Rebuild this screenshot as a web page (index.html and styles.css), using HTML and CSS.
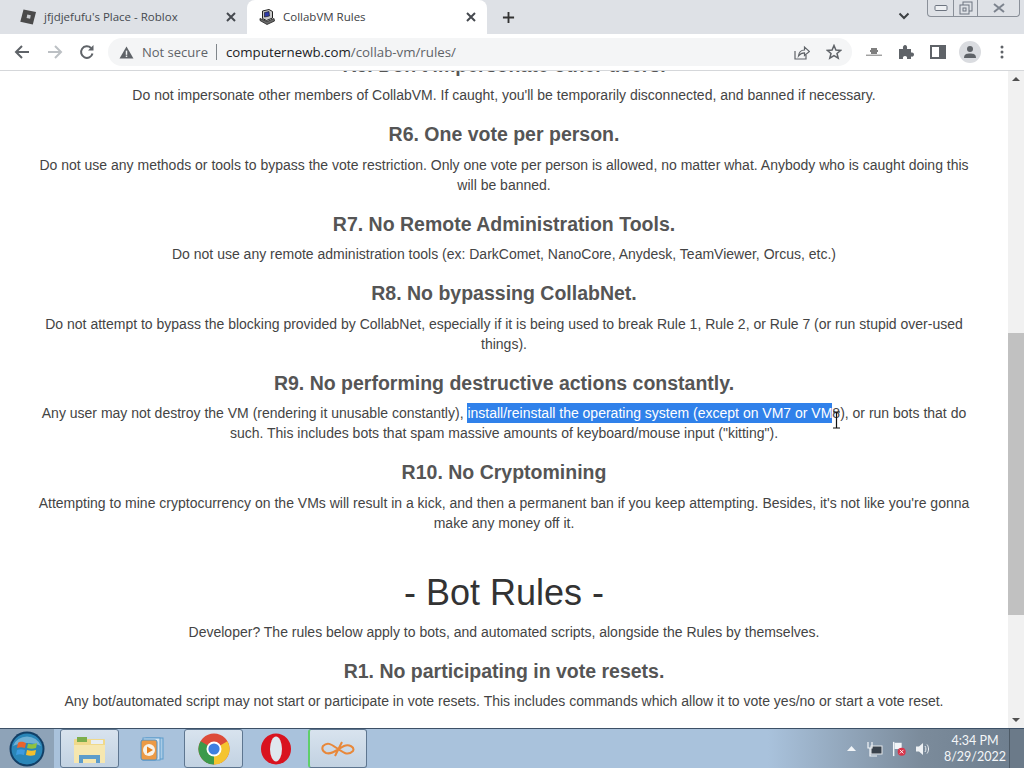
FILE: index.html
```html
<!DOCTYPE html>
<html lang="en">
<head>
  <meta charset="UTF-8">
  <title>CollabVM Rules</title>
  <link rel="stylesheet" href="styles.css">
</head>
<body>

  <!-- Tab strip -->
  <div class="tab-strip">
    <div class="tab">
      <svg class="favicon" viewBox="0 0 16 16"><path d="M3.5 0.5 L16 3 L12.8 15.5 L0.3 12.8 Z" fill="#4a4a4a"/><path d="M7.3 5.6 L10.8 6.3 L10.1 9.7 L6.6 9 Z" fill="#c9ccd0"/></svg>
      <span class="tab-title">jfjdjefufu's Place - Roblox</span>
      <svg class="tab-close" viewBox="0 0 10 10"><path d="M1 1 L9 9 M9 1 L1 9" stroke="#45494f" stroke-width="2"/></svg>
    </div>
    <div class="tab active">
      <svg class="favicon" viewBox="0 0 16 16"><path d="M1 11.5 L8 15.5 L15.5 12 L15 9.5 L8 12.5 L1 9.5 Z" fill="#6b6b6b" stroke="#222" stroke-width="0.8"/><path d="M3.5 2 L10 0.5 L13.5 2.5 L13.5 9 L7.5 11.5 L3.5 9.5 Z" fill="#c9c9c9" stroke="#222"/><path d="M5.5 3.5 L10 2.5 L10.5 7 L5.5 8 Z" fill="#2e3aa8" stroke="#111" stroke-width="0.6"/></svg>
      <span class="tab-title">CollabVM Rules</span>
      <svg class="tab-close" viewBox="0 0 10 10"><path d="M1 1 L9 9 M9 1 L1 9" stroke="#45494f" stroke-width="2"/></svg>
    </div>
    <svg class="new-tab" viewBox="0 0 14 14"><path d="M7 1 V13 M1 7 H13" stroke="#333" stroke-width="2"/></svg>
    <div class="strip-end">
      <svg class="tab-search" viewBox="0 0 12 8"><path d="M1.5 1.5 L6 6 L10.5 1.5" fill="none" stroke="#3c4043" stroke-width="2"/></svg>
      <div class="window-buttons">
        <div class="win-btn"><svg viewBox="0 0 14 8" width="14" height="8"><rect x="1" y="1.5" width="12" height="5" rx="1" fill="#eef0f3" stroke="#6d7480"/></svg></div>
        <div class="win-btn narrow"><svg viewBox="0 0 14 14" width="14" height="14"><rect x="4" y="1" width="9" height="9" fill="none" stroke="#6d7480"/><rect x="1" y="4" width="9" height="9" fill="#dee1e6" stroke="#6d7480"/><rect x="4" y="7" width="3" height="3" fill="none" stroke="#6d7480"/></svg></div>
        <div class="win-btn wide"><svg viewBox="0 0 12 10" width="12" height="10"><path d="M1 1 L11 9 M11 1 L1 9" stroke="#7c838e" stroke-width="2"/></svg></div>
      </div>
    </div>
  </div>

  <!-- Address bar -->
  <div class="toolbar">
    <svg class="nav-icon" viewBox="0 0 16 16"><path d="M15 8 H2 M8 2 L2 8 L8 14" fill="none" stroke="#5f6368" stroke-width="2"/></svg>
    <svg class="nav-icon" viewBox="0 0 16 16"><path d="M1 8 H14 M8 2 L14 8 L8 14" fill="none" stroke="#bcc0c4" stroke-width="2"/></svg>
    <svg class="nav-icon" viewBox="0 0 16 16"><path d="M13.5 9.5 A5.8 5.8 0 1 1 12 4" fill="none" stroke="#5f6368" stroke-width="2"/><path d="M14.5 1 V6.5 H9 Z" fill="#5f6368"/></svg>
    <div class="omnibox">
      <svg class="warn-icon" viewBox="0 0 16 14"><path d="M8 0.5 L15.5 13.5 H0.5 Z" fill="#5f6368"/><rect x="7.2" y="5" width="1.6" height="4.5" fill="#f1f3f4"/><rect x="7.2" y="10.3" width="1.6" height="1.6" fill="#f1f3f4"/></svg>
      <span class="not-secure">Not secure</span>
      <span class="omni-sep"></span>
      <span class="url">computernewb.com<span class="url-path">/collab-vm/rules/</span></span>
      <svg class="omni-icon share" viewBox="0 0 16 16"><path d="M1 7 V15 H12 V11" fill="none" stroke="#5f6368" stroke-width="1.2"/><path d="M4.5 12 C5 8 7.5 6 10.5 6 V3 L15.5 7.5 L10.5 11.5 V8.8 C8 8.8 6 10 4.5 12 Z" fill="none" stroke="#5f6368" stroke-width="1.2"/></svg>
      <svg class="omni-icon" viewBox="0 0 16 16"><path d="M8 1.5 L9.9 6 L14.7 6.4 L11 9.5 L12.2 14.2 L8 11.7 L3.8 14.2 L5 9.5 L1.3 6.4 L6.1 6 Z" fill="none" stroke="#5f6368" stroke-width="1.5"/></svg>
    </div>
    <div class="tool-icons">
      <svg class="ext-mini" viewBox="0 0 16 8"><path d="M5 1 H11 M4 3 H12 M5 5 H11" stroke="#555" stroke-width="1.3"/><path d="M0 7.2 H16" stroke="#777"/></svg>
      <svg class="tool-icon" viewBox="0 0 16 16"><path d="M1 5 H5 C4.5 2 6 1 7 1 C8.5 1 9.5 2.5 9 5 H13 V8.5 C15.5 8 16 9.5 16 10.5 C16 12 15 13 13 12.5 V15 H9 C9.5 13 8.5 12 7 12 C5.5 12 4.5 13 5 15 H1 Z" fill="#5f6368"/></svg>
      <svg class="tool-icon panel" viewBox="0 0 16 16"><path d="M1 2 H15 V14 H1 Z" fill="none" stroke="#5f6368" stroke-width="2"/><rect x="9" y="2" width="6" height="12" fill="#5f6368"/></svg>
      <div class="avatar"><svg viewBox="0 0 16 16" width="16" height="16"><circle cx="8" cy="5" r="3" fill="#5f6368"/><path d="M2 14 C2 10 5 9.5 8 9.5 C11 9.5 14 10 14 14 Z" fill="#5f6368"/></svg></div>
      <svg class="menu-dots" viewBox="0 0 4 14"><circle cx="2" cy="2" r="1.5" fill="#5f6368"/><circle cx="2" cy="7" r="1.5" fill="#5f6368"/><circle cx="2" cy="12" r="1.5" fill="#5f6368"/></svg>
    </div>
  </div>

  <!-- Page -->
  <div class="viewport">
    <div class="page">
      <div class="rule">
        <h3>R5. Don't impersonate other users.</h3>
        <p>Do not impersonate other members of CollabVM. If caught, you'll be temporarily disconnected, and banned if necessary.</p>
      </div>
      <div class="rule">
        <h3>R6. One vote per person.</h3>
        <p>Do not use any methods or tools to bypass the vote restriction. Only one vote per person is allowed, no matter what. Anybody who is caught doing this will be banned.</p>
      </div>
      <div class="rule">
        <h3>R7. No Remote Administration Tools.</h3>
        <p>Do not use any remote administration tools (ex: DarkComet, NanoCore, Anydesk, TeamViewer, Orcus, etc.)</p>
      </div>
      <div class="rule">
        <h3>R8. No bypassing CollabNet.</h3>
        <p>Do not attempt to bypass the blocking provided by CollabNet, especially if it is being used to break Rule 1, Rule 2, or Rule 7 (or run stupid over-used things).</p>
      </div>
      <div class="rule">
        <h3>R9. No performing destructive actions constantly.</h3>
        <p>Any user may not destroy the VM (rendering it unusable constantly), <span class="selected">install/reinstall the operating system (except on VM7 or VM</span>8), or run bots that do such. This includes bots that spam massive amounts of keyboard/mouse input ("kitting").</p>
      </div>
      <div class="rule">
        <h3>R10. No Cryptomining</h3>
        <p>Attempting to mine cryptocurrency on the VMs will result in a kick, and then a permanent ban if you keep attempting. Besides, it's not like you're gonna make any money off it.</p>
      </div>
      <h1>- Bot Rules -</h1>
      <p class="intro">Developer? The rules below apply to bots, and automated scripts, alongside the Rules by themselves.</p>
      <div class="rule">
        <h3>R1. No participating in vote resets.</h3>
        <p>Any bot/automated script may not start or participate in vote resets. This includes commands which allow it to vote yes/no or start a vote reset.</p>
      </div>
    </div>
    <div class="scrollbar">
      <div class="scroll-arrow up"></div>
      <div class="scroll-track"><div class="scroll-thumb"></div></div>
      <div class="scroll-arrow down"></div>
    </div>
    <svg class="ibeam" viewBox="0 0 9 18"><path d="M1 1 H8 M4.5 1 V17 M1 17 H8" stroke="#111" stroke-width="1.2" fill="none"/></svg>
  </div>

  <!-- Windows taskbar -->
  <div class="taskbar">
    <div class="start-orb">
      <svg viewBox="0 0 36 36" width="36" height="36">
        <circle cx="18" cy="18" r="17.5" fill="#123f66"/>
        <circle cx="18" cy="18" r="15.5" fill="#2a86b8"/>
        <path d="M4 15 A15 15 0 0 1 32 15 C24 11 12 11 4 15 Z" fill="#6fb0d4"/>
        <path d="M9 12 C12 10 14 11 17 12 L16 17 C13 16 11 16 8 17 Z" fill="#e8632c"/>
        <path d="M19 12.5 C22 14 25 13 28 12 L27 17 C24 18 21 18 18 17 Z" fill="#8fc23f"/>
        <path d="M8 19 C11 18 13 18 16 19 L15 24 C12 23 10 23 7 24 Z" fill="#3d9be0"/>
        <path d="M18 19 C21 20 24 20 27 19 L26 24 C23 25 20 25 17 24 Z" fill="#f5c02e"/>
      </svg>
    </div>
    <div class="task-btn open">
      <svg viewBox="0 0 34 30" width="34" height="30"><rect x="1" y="5" width="31" height="24" rx="1" fill="#f0d98a"/><path d="M4 3 H14 V8 H4 Z" fill="#7cae4c"/><path d="M18 6 H30 V10 H18 Z" fill="#e9eef2"/><path d="M1 11 H32 V29 H1 Z" fill="#f6e7b0"/><path d="M6 29 V21 H27 V29 H23 V25 H10 V29 Z" fill="#5d9ccb"/></svg>
    </div>
    <div class="task-btn">
      <svg viewBox="0 0 28 28" width="28" height="28"><rect x="8" y="3" width="17" height="21" fill="#a9cbe6" stroke="#5d9ccb"/><rect x="5" y="3" width="17" height="22" fill="#d7e6f2" stroke="#5d9ccb"/><rect x="3" y="5" width="16" height="20" rx="2" fill="#ec9a45" stroke="#4f90c4"/><circle cx="11" cy="15" r="6" fill="#f7f3ea"/><path d="M9 11.5 L15 15 L9 18.5 Z" fill="#e8821e"/></svg>
    </div>
    <div class="task-btn open">
      <svg viewBox="0 0 32 32" width="32" height="32"><circle cx="16" cy="16" r="15.5" fill="#dd4b39"/><path d="M16 16 L29.4 8.2 A15.5 15.5 0 0 1 16 31.5 Z" fill="#f4c430"/><path d="M16 16 L16 31.5 A15.5 15.5 0 0 1 2.6 8.2 Z" fill="#3c9a4b"/><circle cx="16" cy="16" r="7.5" fill="#fff"/><circle cx="16" cy="16" r="5.6" fill="#3f7fe0"/></svg>
    </div>
    <div class="task-btn">
      <svg viewBox="0 0 32 32" width="32" height="32"><ellipse cx="16" cy="16" rx="15" ry="15.5" fill="#d9131f"/><ellipse cx="16" cy="16" rx="6" ry="12.5" fill="#dfe7ee"/></svg>
    </div>
    <div class="task-btn open accent">
      <svg viewBox="0 0 34 16" width="34" height="16"><path d="M2 5 C7 0 11 4 17 8 C23 12 27 15 32 10 C34 6 28 3 23 5 C17 8 11 14 5 12 C1 10 1 7 2 5 Z M21 1 L14 15" fill="none" stroke="#e8883a" stroke-width="2"/></svg>
    </div>
    <div class="tray">
      <svg class="tray-up" viewBox="0 0 9 5"><path d="M4.5 0 L9 5 H0 Z" fill="#f2f5f8"/></svg>
      <svg class="tray-icon" viewBox="0 0 16 16"><rect x="4" y="5" width="11" height="8" fill="#39424c" stroke="#e6e9ec"/><path d="M1 1 V7 H5 V1 M3 7 V15 H10" fill="none" stroke="#f2f5f8" stroke-width="1.2"/></svg>
      <svg class="tray-icon" viewBox="0 0 16 18"><path d="M2 1 V17" stroke="#f2f5f8" stroke-width="1.6"/><path d="M3 2 H11 V9 H3 Z" fill="#f2f5f8"/><circle cx="11" cy="12" r="4.5" fill="#d8344a"/><path d="M9 10 L13 14 M13 10 L9 14" stroke="#fff"/></svg>
      <svg class="tray-icon" viewBox="0 0 16 16"><path d="M1 5.5 H4 L8 2 V14 L4 10.5 H1 Z" fill="#eef1f4"/><path d="M10 5 C11.2 7 11.2 9 10 11 M12 3.5 C14 6 14 10 12 12.5" fill="none" stroke="#eef1f4"/></svg>
      <div class="clock">
        <span>4:34 PM</span>
        <span>8/29/2022</span>
      </div>
      <div class="show-desktop"></div>
    </div>
  </div>

</body>
</html>
```

FILE: styles.css
```css
/* General Styles */
html, body {
  margin: 0;
  height: 768px;
  overflow: hidden;
}

body {
  display: flex;
  flex-direction: column;
  width: 1024px;
  font-family: "Liberation Sans", Arial, sans-serif;
  background-color: #fff;
}

/* Tab strip */
.tab-strip {
  display: flex;
  align-items: flex-end;
  height: 34px;
  padding-left: 8px;
  background-color: #dee1e6;
  flex-shrink: 0;
}

.tab {
  display: flex;
  align-items: center;
  width: 239px;
  height: 34px;
  box-sizing: border-box;
  padding: 0 11px 0 12px;
  font-family: "Open Sans", sans-serif;
  font-size: 11.5px;
  color: #45494f;
}

.tab.active {
  width: 240px;
  background-color: #fff;
  border-radius: 8px 8px 0 0;
  color: #3c4043;
}

.favicon {
  width: 16px;
  height: 16px;
  margin-right: 8px;
  flex-shrink: 0;
}

.tab-title {
  flex: 1;
  padding-bottom: 1px;
  white-space: nowrap;
}

.tab-close {
  width: 10px;
  height: 10px;
}

.new-tab {
  width: 13px;
  height: 13px;
  margin: 0 0 10px 15px;
}

.strip-end {
  display: flex;
  align-items: flex-start;
  height: 34px;
  margin-left: auto;
  padding-right: 4px;
}

.tab-search {
  width: 12px;
  height: 8px;
  margin: 12px 17px 0 0;
}

.window-buttons {
  display: flex;
  height: 16px;
  border: 1px solid #8a9099;
  border-top: none;
  border-radius: 0 0 4px 4px;
}

.win-btn {
  display: flex;
  align-items: center;
  justify-content: center;
  width: 25px;
  border-right: 1px solid #8a9099;
}

.win-btn.narrow {
  width: 23px;
}

.win-btn.wide {
  width: 41px;
  border-right: none;
}

/* Toolbar */
.toolbar {
  display: flex;
  align-items: center;
  height: 36px;
  padding-left: 14px;
  background-color: #fff;
  border-bottom: 1px solid #d5d7da;
  flex-shrink: 0;
}

.nav-icon {
  width: 16px;
  height: 16px;
  margin-right: 16.5px;
}

.omnibox {
  display: flex;
  align-items: center;
  width: 744px;
  height: 28px;
  margin-left: -3.5px;
  box-sizing: border-box;
  padding: 0 10px 0 11px;
  background-color: #f4f5f6;
  border-radius: 14px;
}

.warn-icon {
  width: 15px;
  height: 13px;
  margin-right: 8px;
}

.not-secure {
  font-family: "Open Sans", sans-serif;
  font-size: 13px;
  color: #5f6368;
}

.omni-sep {
  width: 1px;
  height: 16px;
  margin: 0 9px 0 8px;
  background-color: #80868b;
}

.url {
  font-family: "Open Sans", sans-serif;
  font-size: 13.3px;
  color: #202124;
}

.url-path {
  color: #5f6368;
}

.omni-icon {
  width: 16px;
  height: 16px;
  margin-left: 16px;
}

.omni-icon.share {
  margin-left: auto;
}

.tool-icons {
  display: flex;
  align-items: center;
  margin-left: 14px;
}

.ext-mini {
  width: 16px;
  height: 8px;
  margin-right: 16px;
}

.tool-icon {
  width: 16px;
  height: 16px;
  margin-right: 16px;
}

.tool-icon.panel {
  margin-right: 13px;
}

.avatar {
  display: flex;
  align-items: center;
  justify-content: center;
  width: 22px;
  height: 22px;
  margin-right: 19px;
  border-radius: 50%;
  background-color: #dadce0;
}

.menu-dots {
  width: 4px;
  height: 14px;
}

/* Page */
.viewport {
  position: relative;
  display: flex;
  flex: 1;
  min-height: 0;
  overflow: hidden;
}

.page {
  flex: 1;
  min-width: 0;
  margin-top: -21.25px;
  padding: 0 38px;
  color: #444;
  text-align: center;
}

.rule {
  margin-bottom: 14.25px;
}

.rule h3 {
  margin: 0 0 5.25px;
  font-size: 19.5px;
  line-height: 30px;
  color: #555;
}

.rule p,
.intro {
  margin: 0;
  font-size: 14px;
  line-height: 20px;
}

.selected {
  padding: 2px 0;
  background-color: #3081ea;
  color: #fff;
}

h1 {
  margin: 30px 0 0;
  font-size: 36px;
  font-weight: normal;
  line-height: 59px;
  color: #333;
}

.intro {
  margin: 0 0 14px;
}

.ibeam {
  position: absolute;
  left: 832px;
  top: 340px;
  width: 9px;
  height: 18px;
}

/* Scrollbar */
.scrollbar {
  display: flex;
  flex-direction: column;
  width: 16px;
  flex-shrink: 0;
  background-color: #f1f1f1;
}

.scroll-arrow {
  height: 16px;
  position: relative;
}

.scroll-arrow::after {
  content: "";
  position: absolute;
  left: 4px;
  border-left: 4px solid transparent;
  border-right: 4px solid transparent;
}

.scroll-arrow.up::after {
  top: 6px;
  border-bottom: 4px solid #505050;
}

.scroll-arrow.down::after {
  top: 6px;
  border-top: 4px solid #505050;
}

.scroll-track {
  flex: 1;
  padding-top: 246px;
}

.scroll-thumb {
  height: 282px;
  background-color: #c1c1c1;
}

/* Taskbar */
.taskbar {
  display: flex;
  align-items: stretch;
  height: 40px;
  box-sizing: border-box;
  border-top: 1px solid #3c5066;
  background: linear-gradient(90deg, #a9c2dc 0%, #a9c2dc 75%, #7b8b9b 90%, #6d7d8d 100%);
  flex-shrink: 0;
}

.start-orb {
  display: flex;
  align-items: center;
  justify-content: center;
  width: 54px;
  margin-right: 6px;
  background-color: #8ea3b8;
}

.task-btn {
  display: flex;
  align-items: center;
  justify-content: center;
  width: 59px;
  height: 39px;
  margin-right: 3px;
  box-sizing: border-box;
}

.task-btn.open {
  background: linear-gradient(180deg, #d8e3ee 0%, #c2d2e2 100%);
  border: 1px solid #5e7690;
  border-radius: 3px;
}

.task-btn.accent {
  border-left: 2px solid #5fcf6a;
}

.tray {
  display: flex;
  align-items: center;
  margin-left: auto;
}

.tray-up {
  width: 9px;
  height: 5px;
  margin-right: 11px;
}

.tray-icon {
  width: 16px;
  height: 16px;
  margin-right: 8px;
}

.clock {
  display: flex;
  flex-direction: column;
  align-items: center;
  width: 60px;
  margin-left: 6px;
  font-family: "Lato", sans-serif;
  font-size: 12.5px;
  line-height: 16px;
  color: #f4f6f8;
}

.show-desktop {
  align-self: stretch;
  width: 14px;
  margin-left: 4px;
  background-color: #6b7a89;
  border-left: 1px solid #4d5a66;
}
```
